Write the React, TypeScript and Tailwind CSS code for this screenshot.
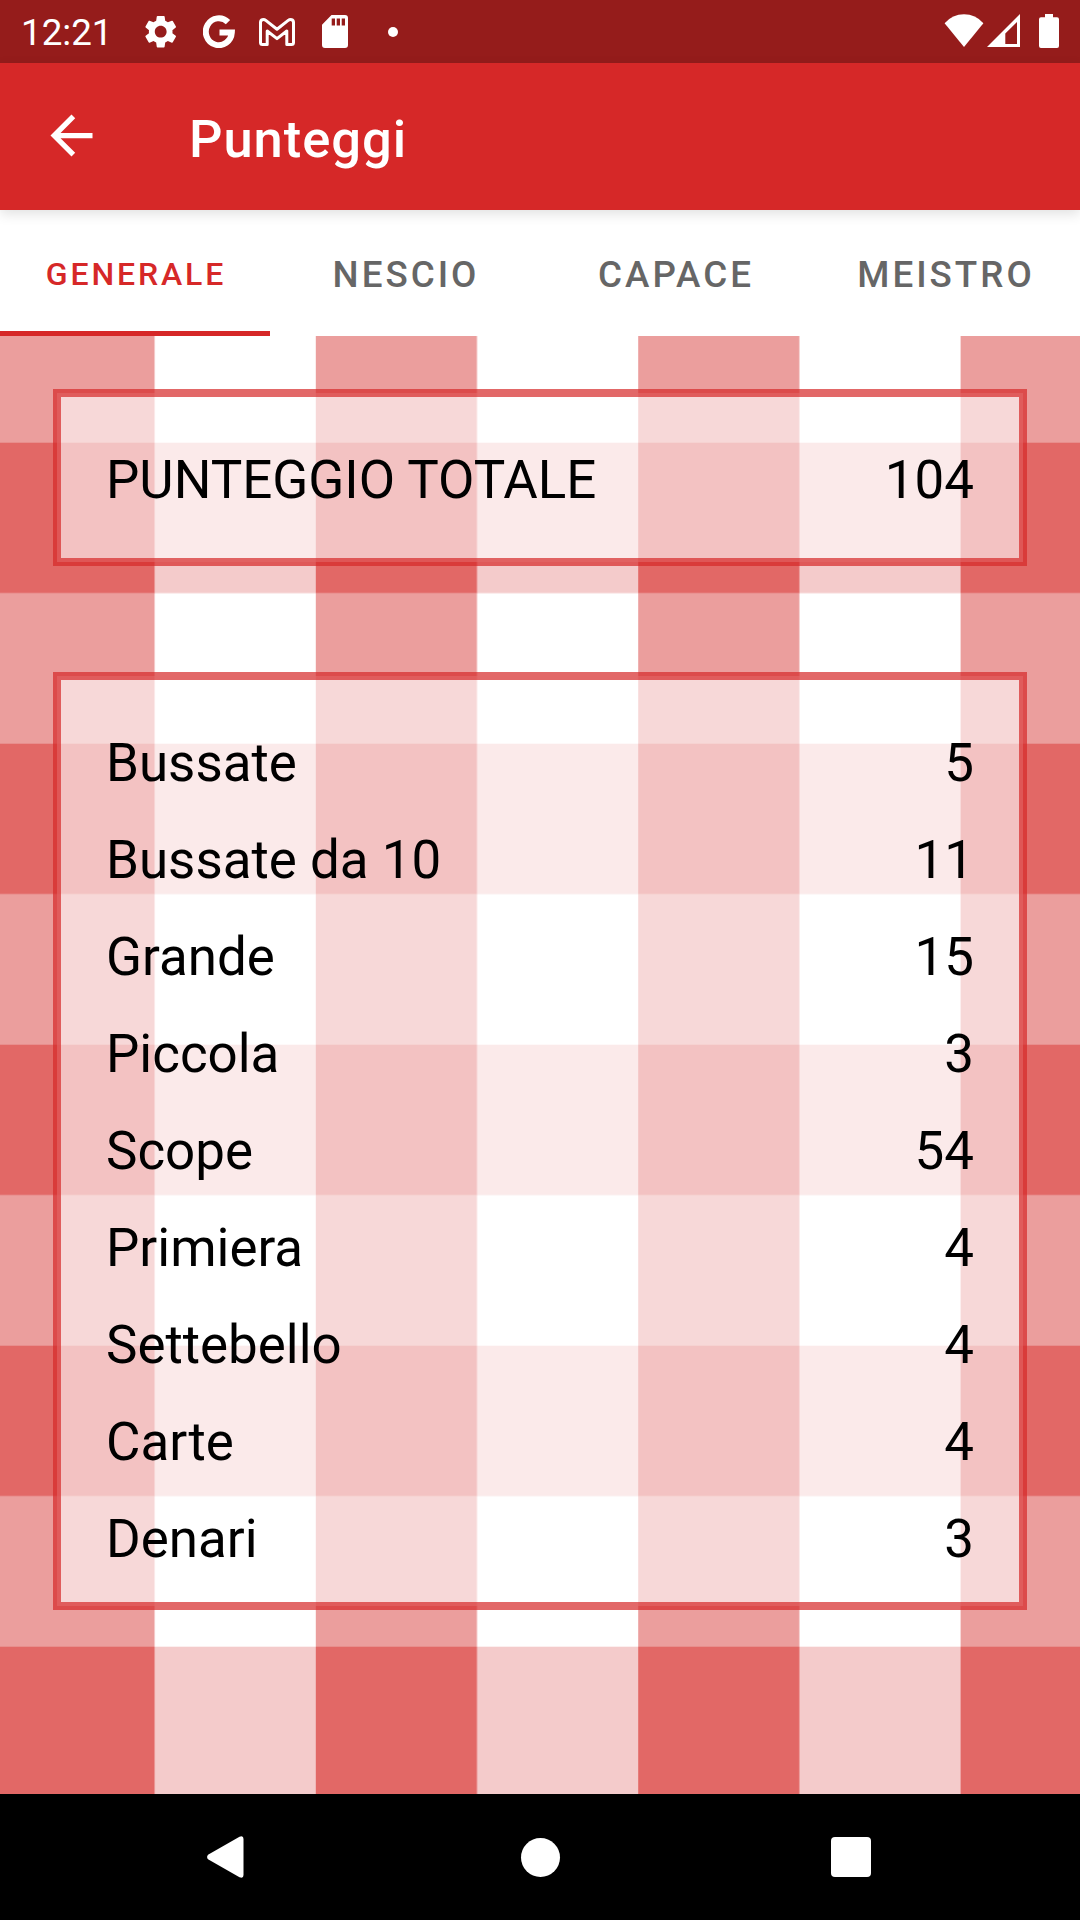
// score screen, sized for a 1080x1920 phone
import { MdArrowBack, MdSettings } from 'react-icons/md';

const tabs = ['GENERALE', 'NESCIO', 'CAPACE', 'MEISTRO'];

const scores = [
    { label: 'Bussate', value: 5 },
    { label: 'Bussate da 10', value: 11 },
    { label: 'Grande', value: 15 },
    { label: 'Piccola', value: 3 },
    { label: 'Scope', value: 54 },
    { label: 'Primiera', value: 4 },
    { label: 'Settebello', value: 4 },
    { label: 'Carte', value: 4 },
    { label: 'Denari', value: 3 },
];

const GoogleIcon = () => (
    <svg viewBox="0 0 32 33" fill="none" stroke="white" strokeWidth="6" className="h-[33px] w-8">
        <path d="M25 7.2A13 13.4 0 1 0 28.8 17.5H16.5" />
    </svg>
);

const GmailIcon = () => (
    <svg viewBox="0 0 36 28" fill="none" stroke="white" strokeWidth="3" strokeLinejoin="round" className="h-7 w-9">
        <path d="M1.5 4.4V24.5q0 2 2 2H8.2V13L18 20.6L27.8 13V26.5h4.7q2 0 2-2V4.4C34.5 1.6 31.4 .7 29.2 2.4L18 11.2L6.8 2.4C4.6 .7 1.5 1.6 1.5 4.4Z" />
    </svg>
);

const SdCardIcon = () => (
    <svg viewBox="0 0 26 33" fill="white" className="h-[33px] w-[26px]">
        <path fillRule="evenodd" d="M9.5 0H23a3 3 0 0 1 3 3V30a3 3 0 0 1-3 3H3a3 3 0 0 1-3-3V9.7ZM9.7 3.5V10.5H13V3.5ZM14.7 3.5V10.5H18V3.5ZM19.7 3.5V10.5H23V3.5Z" />
    </svg>
);

const WifiIcon = () => (
    <svg viewBox="0 0 40 33" fill="white" className="h-[33px] w-10">
        <path d="M20 33L.6 9.2Q8.5 .3 20 .3T39.4 9.2Z" />
    </svg>
);

const SignalIcon = () => (
    <svg viewBox="0 0 33 33" fill="white" className="h-[33px] w-[33px]">
        <path fillRule="evenodd" d="M33 0V33H0ZM30 8L18.3 19.6V30H30Z" />
    </svg>
);

const BatteryIcon = () => (
    <svg viewBox="0 0 20 34" fill="white" className="h-[34px] w-5">
        <path d="M6 0H14V3.3H18a2 2 0 0 1 2 2V32a2 2 0 0 1-2 2H2a2 2 0 0 1-2-2V5.3a2 2 0 0 1 2-2H6Z" />
    </svg>
);

// red and white checked tablecloth
const Tablecloth = () => (
    <svg className="absolute inset-0 h-full w-full" width="1080" height="1458">
        <defs>
            <pattern id="check" x="-6.6" y="106.7" width="322.4" height="301" patternUnits="userSpaceOnUse">
                <rect width="322.4" height="301" fill="#fff" />
                <rect width="161.2" height="301" fill="#eb9e9d" />
                <rect width="322.4" height="150.5" fill="#f4cbcb" />
                <rect width="161.2" height="150.5" fill="#e26866" />
            </pattern>
        </defs>
        <rect width="1080" height="1458" fill="url(#check)" />
    </svg>
);

function Row({ label, value }: { label: string; value: number }) {
    return (
        <div className="flex h-[97px] items-center justify-between text-[52.9px] leading-none text-black">
            <span>{label}</span>
            <span>{value}</span>
        </div>
    );
}

// the fill starts halfway through the frame, so the frame is made of two borders
function Card({ children }: { children: React.ReactNode }) {
    return (
        <div className="border-4 border-[#d62828]/70">
            <div className="border-4 border-[#d62828]/70 bg-white/60 px-[45px] pt-[35px] pb-[14px]">{children}</div>
        </div>
    );
}

export default function App() {
    return (
        <div className="flex h-[1920px] w-[1080px] flex-col overflow-hidden bg-white font-[Roboto,sans-serif]">
            {/* Status bar */}
            <div className="flex h-[63px] items-start justify-between bg-[#951c1b] pr-[21px] pl-[21px] text-white">
                <div className="flex h-[63px] items-center">
                    <span className="w-[120px] pt-[2px] text-[36.75px] leading-[66px]">12:21</span>
                    <MdSettings className="h-[39.4px] w-[39.4px]" />
                    <div className="ml-[23px]"><GoogleIcon /></div>
                    <div className="ml-6"><GmailIcon /></div>
                    <div className="ml-[27px]"><SdCardIcon /></div>
                    <div className="ml-10 h-[10px] w-[10px] rounded-full bg-white" />
                </div>
                <div className="flex pt-[14px]">
                    <WifiIcon />
                    <div className="ml-[3px]"><SignalIcon /></div>
                    <div className="ml-[19px]"><BatteryIcon /></div>
                </div>
            </div>

            {/* App bar */}
            <header className="z-10 flex h-[147px] shrink-0 items-center bg-[#d62828] pl-10 text-white shadow-[0_4px_12px_rgba(0,0,0,0.12)]">
                <MdArrowBack className="mb-[2px] h-[63px] w-[63px]" />
                <h1 className="ml-[86px] pt-[5px] text-[52.5px] leading-none font-medium tracking-[0.95px]">Punteggi</h1>
            </header>

            <nav className="grid h-[126px] shrink-0 grid-cols-4 bg-white font-medium">
                {tabs.map((tab, i) => (
                    <button
                        key={tab}
                        className={i === 0
                            ? 'border-b-[5px] border-[#d62828] pt-[7px] pl-[2px] text-[32px] tracking-[2.9px] text-[#d62828]'
                            : 'pt-[3px] pl-[2px] text-[36.75px] tracking-[3px] text-[#666]'}
                    >
                        {tab}
                    </button>
                ))}
            </nav>

            <main className="relative h-[1458px] shrink-0">
                <Tablecloth />
                <div className="relative flex flex-col gap-[106px] px-[53px] pt-[53px]">
                    <Card>
                        <div className="pb-[15px]">
                            <Row label="PUNTEGGIO TOTALE" value={104} />
                        </div>
                    </Card>
                    <Card>
                        {scores.map((score) => (
                            <Row key={score.label} label={score.label} value={score.value} />
                        ))}
                    </Card>
                </div>
            </main>

            {/* System navigation */}
            <div className="flex h-[126px] shrink-0 items-center bg-black pl-[207px]">
                <svg viewBox="0 0 37 42" className="h-[42px] w-[37px]" fill="white">
                    <path d="M1 18.7L32.5 .8Q36.5-.8 36.5 3V39Q36.5 42.8 32.5 41.2L1 23.3Q-.8 21 1 18.7Z" />
                </svg>
                <div className="ml-[276.5px] h-[39px] w-[39px] rounded-full bg-white" />
                <div className="ml-[271.5px] h-10 w-10 rounded-[4px] bg-white" />
            </div>
        </div>
    );
}
